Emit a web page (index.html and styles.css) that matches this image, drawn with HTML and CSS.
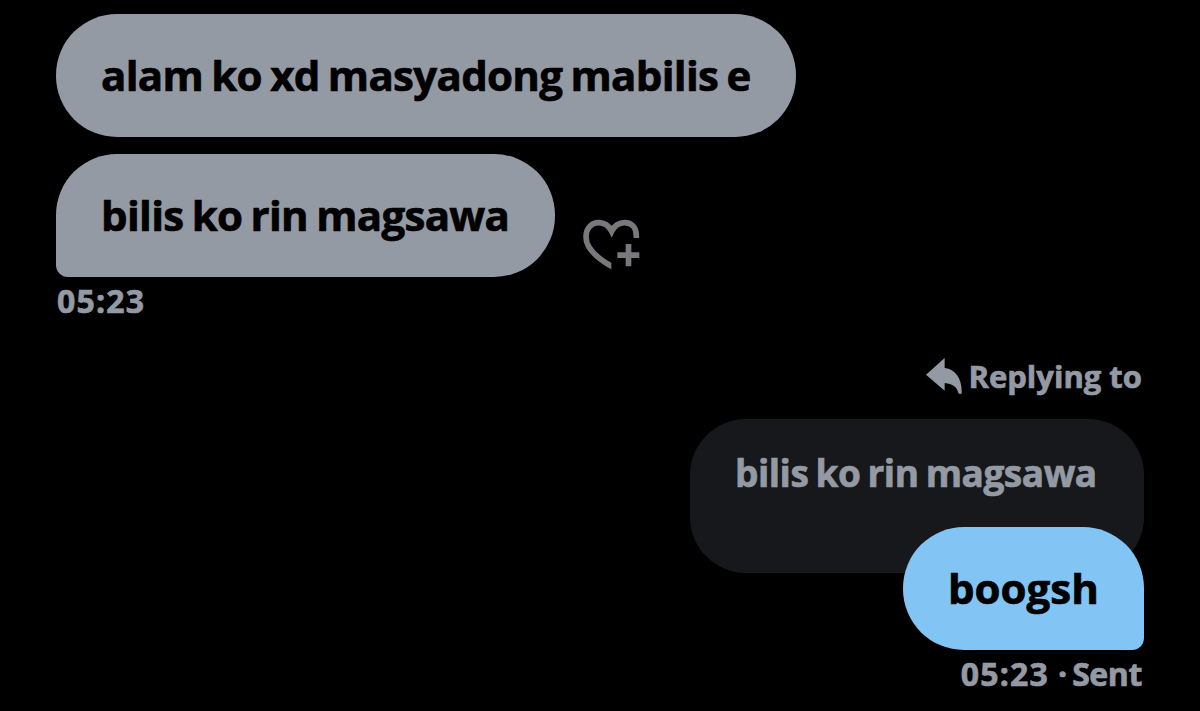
FILE: index.html
```html
<!DOCTYPE html>
<html lang="tl">
<head>
    <meta charset="UTF-8">
    <meta name="viewport" content="width=device-width, initial-scale=1.0">
    <title>Messages</title>
    <link rel="stylesheet" href="styles.css">
</head>
<body>
    <main class="chat">
        <section class="received">
            <div class="bubble long"><span>alam ko xd masyadong mabilis e</span></div>
            <div class="row">
                <div class="bubble last"><span>bilis ko rin magsawa</span></div>
                <button class="react" aria-label="Add reaction">
                    <svg viewBox="0 0 174 153" width="58" height="51">
                        <clipPath id="cut"><path d="M0 0H174V57H85V153H0z"/></clipPath>
                        <path class="heart" clip-path="url(#cut)" d="M160 60V50C160 26 146 11 125 11C107 11 94 21 86 37C78 21 65 11 47 11C25 11 9 28 9 53C9 88 42 119 95 147"/>
                        <path class="plus" d="M128 75h17v25h24v17h-24v25h-17v-25h-25v-17h25z"/>
                    </svg>
                </button>
            </div>
            <div class="time">05:23</div>
        </section>

        <section class="sent">
            <div class="replying">
                <svg viewBox="0 0 108 108" width="36" height="36">
                    <path d="M0 50L56 0V30C88 34 107 60 107 100V107H98C93 87 80 77 56 75V98z"/>
                </svg>
                <span>Replying to</span>
            </div>
            <div class="quote"><span>bilis ko rin magsawa</span></div>
            <div class="bubble mine"><span>boogsh</span></div>
            <div class="status"><span class="clock">05:23</span><span class="dot">·</span><span class="state">Sent</span></div>
        </section>
    </main>
</body>
</html>
```

FILE: styles.css
```css
* {
    box-sizing: border-box;
}
body {
    margin: 0;
    background: #000;
    color: #949aa4;
    font-family: "Open Sans", sans-serif;
    font-weight: 700;
    -webkit-text-stroke: 0.7px;
    overflow: hidden;
}
.chat {
    height: 711px;
    padding: 14px 56px 0;
}
.received,
.sent {
    display: flex;
    flex-direction: column;
    white-space: nowrap;
}
.received {
    align-items: flex-start;
}
.sent {
    align-items: flex-end;
    margin-top: 32px;
}
.bubble {
    height: 123px;
    padding: 0 45px;
    border-radius: 61px;
    background: #949aa4;
    color: #000;
    font-size: 42px;
    line-height: 121px;
    letter-spacing: -0.69px;
    word-spacing: -2px;
}
.long {
    width: 740px;
    margin-bottom: 17px;
}
.last {
    width: 499px;
    border-bottom-left-radius: 12px;
}
.row {
    display: flex;
}
.react {
    height: 51px;
    margin: 65px 0 0 28px;
    padding: 0;
    border: none;
    background: none;
}
svg {
    display: block;
    fill: #949aa4;
}
.react .heart {
    fill: none;
    stroke: #77797d;
    stroke-width: 17;
}
.react .plus {
    fill: #77797d;
}
.time,
.status {
    font-size: 32px;
    line-height: 48px;
}
.time,
.clock {
    letter-spacing: 1.2px;
}
.time {
    padding-left: 1px;
}
.replying {
    display: flex;
    align-items: center;
    gap: 6px;
    height: 38px;
    padding-right: 2px;
    font-size: 31px;
}
.replying span {
    line-height: 36px;
    padding-bottom: 1px;
}
.quote {
    width: 454px;
    height: 154px;
    margin-top: 24px;
    padding: 0 45px;
    border-radius: 56px;
    background: #17181b;
    font-size: 37px;
    line-height: 107px;
    letter-spacing: -0.47px;
    word-spacing: -2px;
}
.mine {
    width: 241px;
    margin-top: -46px;
    border-bottom-right-radius: 12px;
    background: #82c5f5;
    letter-spacing: 0;
}
.status {
    display: flex;
}
.dot {
    margin: 0 5px 0 9px;
}
.state {
    padding-right: 2px;
    letter-spacing: -0.4px;
}
```
